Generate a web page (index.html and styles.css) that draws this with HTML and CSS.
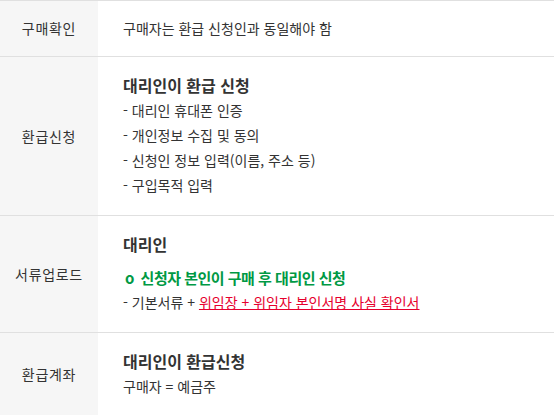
FILE: index.html
```html
<!DOCTYPE html>
<html lang="ko">
<head>
<meta charset="utf-8">
<link rel="stylesheet" href="styles.css">
</head>
<body>
<table class="info">
  <tr>
    <th class="label single">구매확인</th>
    <td class="body single">구매자는 환급 신청인과 동일해야 함</td>
  </tr>
  <tr>
    <th class="label">환급신청</th>
    <td class="body">
      <div class="title">대리인이 환급 신청</div>
      <div>- 대리인 휴대폰 인증</div>
      <div>- 개인정보 수집 및 동의</div>
      <div>- 신청인 정보 입력(이름, 주소 등)</div>
      <div>- 구입목적 입력</div>
    </td>
  </tr>
  <tr>
    <th class="label">서류업로드</th>
    <td class="body">
      <div class="title">대리인</div>
      <div class="green"><span class="circle">o</span> 신청자 본인이 구매 후 대리인 신청</div>
      <div>- 기본서류 + <span class="red">위임장 + 위임자 본인서명 사실 확인서</span></div>
    </td>
  </tr>
  <tr>
    <th class="label">환급계좌</th>
    <td class="body">
      <div class="title">대리인이 환급신청</div>
      <div>구매자 = 예금주</div>
    </td>
  </tr>
</table>
</body>
</html>
```
FILE: styles.css
```css
html, body {
  margin: 0;
  padding: 0;
  background: #fff;
}
body {
  font-family: "Noto Sans CJK KR", "Noto Sans", sans-serif;
  font-size: 14px;
  color: #333;
}
.info {
  width: 100%;
  border-collapse: collapse;
  border-top: 1px solid #e0e0e0;
}
.info tr {
  border-bottom: 1px solid #e0e0e0;
}
.label {
  width: 98px;
  background: #f6f6f6;
  font-weight: normal;
  text-align: center;
  vertical-align: middle;
  padding: 0;
  line-height: 25px;
  letter-spacing: 0.7px;
}
.body {
  padding: 16px 25px 17px;
  line-height: 25px;
  text-align: left;
  vertical-align: top;
  letter-spacing: 0;
}
.single {
  padding-top: 15px;
  padding-bottom: 15px;
}
.title {
  font-size: 16px;
  font-weight: bold;
}
.green {
  margin-top: 8px;
  color: #009944;
  font-size: 15px;
  font-weight: bold;
  letter-spacing: -0.5px;
}
.circle {
  display: inline-block;
  margin: 0 3px 0 2px;
}
.red {
  color: #e6002d;
  text-decoration: underline;
}
```
